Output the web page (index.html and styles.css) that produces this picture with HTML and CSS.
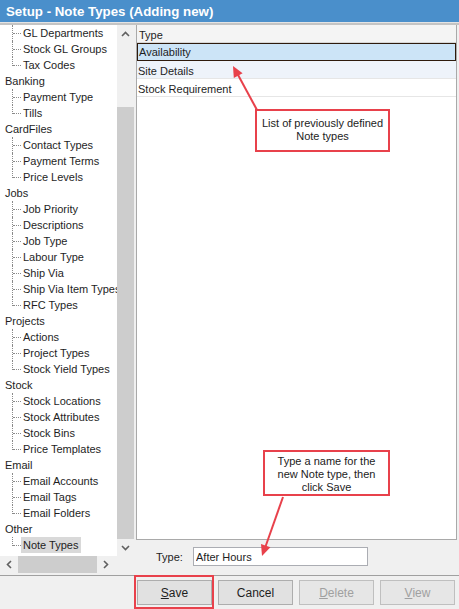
FILE: index.html
```html
<!DOCTYPE html>
<html lang="en">
<head>
    <meta charset="UTF-8">
    <title>Setup - Note Types (Adding new)</title>
    <link rel="stylesheet" href="styles.css">
</head>
<body>
    <div class="window">
        <div class="titlebar">Setup - Note Types (Adding new)</div>

        <div class="main">
            <div class="left">
                <div class="treebox">
                    <div class="tree">
                        <ul class="children open-top">
                            <li><span class="elbow"><span class="h"></span></span><span class="label">GL Departments</span></li>
                            <li><span class="elbow"><span class="h"></span></span><span class="label">Stock GL Groups</span></li>
                            <li class="last"><span class="elbow"><span class="h"></span></span><span class="label">Tax Codes</span></li>
                        </ul>
                        <div class="node">Banking</div>
                        <ul class="children">
                            <li><span class="elbow"><span class="h"></span></span><span class="label">Payment Type</span></li>
                            <li class="last"><span class="elbow"><span class="h"></span></span><span class="label">Tills</span></li>
                        </ul>
                        <div class="node">CardFiles</div>
                        <ul class="children">
                            <li><span class="elbow"><span class="h"></span></span><span class="label">Contact Types</span></li>
                            <li><span class="elbow"><span class="h"></span></span><span class="label">Payment Terms</span></li>
                            <li class="last"><span class="elbow"><span class="h"></span></span><span class="label">Price Levels</span></li>
                        </ul>
                        <div class="node">Jobs</div>
                        <ul class="children">
                            <li><span class="elbow"><span class="h"></span></span><span class="label">Job Priority</span></li>
                            <li><span class="elbow"><span class="h"></span></span><span class="label">Descriptions</span></li>
                            <li><span class="elbow"><span class="h"></span></span><span class="label">Job Type</span></li>
                            <li><span class="elbow"><span class="h"></span></span><span class="label">Labour Type</span></li>
                            <li><span class="elbow"><span class="h"></span></span><span class="label">Ship Via</span></li>
                            <li><span class="elbow"><span class="h"></span></span><span class="label">Ship Via Item Types</span></li>
                            <li class="last"><span class="elbow"><span class="h"></span></span><span class="label">RFC Types</span></li>
                        </ul>
                        <div class="node">Projects</div>
                        <ul class="children">
                            <li><span class="elbow"><span class="h"></span></span><span class="label">Actions</span></li>
                            <li><span class="elbow"><span class="h"></span></span><span class="label">Project Types</span></li>
                            <li class="last"><span class="elbow"><span class="h"></span></span><span class="label">Stock Yield Types</span></li>
                        </ul>
                        <div class="node">Stock</div>
                        <ul class="children">
                            <li><span class="elbow"><span class="h"></span></span><span class="label">Stock Locations</span></li>
                            <li><span class="elbow"><span class="h"></span></span><span class="label">Stock Attributes</span></li>
                            <li><span class="elbow"><span class="h"></span></span><span class="label">Stock Bins</span></li>
                            <li class="last"><span class="elbow"><span class="h"></span></span><span class="label">Price Templates</span></li>
                        </ul>
                        <div class="node">Email</div>
                        <ul class="children">
                            <li><span class="elbow"><span class="h"></span></span><span class="label">Email Accounts</span></li>
                            <li><span class="elbow"><span class="h"></span></span><span class="label">Email Tags</span></li>
                            <li class="last"><span class="elbow"><span class="h"></span></span><span class="label">Email Folders</span></li>
                        </ul>
                        <div class="node">Other</div>
                        <ul class="children">
                            <li class="last"><span class="elbow"><span class="h"></span></span><span class="label selected">Note Types</span></li>
                        </ul>
                    </div>
                    <div class="vscroll">
                        <div class="arrow">
                            <svg width="9" height="6" viewBox="0 0 9 6"><path d="M1 5 L4.5 1.5 L8 5" fill="none" stroke="#606060" stroke-width="1.6"/></svg>
                        </div>
                        <div class="track"><div class="vthumb"></div></div>
                        <div class="arrow">
                            <svg width="9" height="6" viewBox="0 0 9 6"><path d="M1 1 L4.5 4.5 L8 1" fill="none" stroke="#606060" stroke-width="1.6"/></svg>
                        </div>
                    </div>
                </div>
                <div class="hscroll">
                    <div class="hbar">
                        <div class="arrow">
                            <svg width="6" height="9" viewBox="0 0 6 9"><path d="M5 1 L1.5 4.5 L5 8" fill="none" stroke="#606060" stroke-width="1.6"/></svg>
                        </div>
                        <div class="hthumb"></div>
                        <div class="arrow">
                            <svg width="6" height="9" viewBox="0 0 6 9"><path d="M1 1 L4.5 4.5 L1 8" fill="none" stroke="#606060" stroke-width="1.6"/></svg>
                        </div>
                    </div>
                    <div class="corner"></div>
                </div>
            </div>

            <div class="right">
                <div class="grid">
                    <div class="grid-head">Type</div>
                    <div class="grid-row selected">Availability</div>
                    <div class="grid-row alt">Site Details</div>
                    <div class="grid-row">Stock Requirement</div>
                </div>
                <div class="entry">
                    <label class="entry-label" for="typeName">Type:</label>
                    <input class="entry-input" id="typeName" type="text" value="After Hours">
                </div>
            </div>
        </div>

        <div class="footer">
            <button class="btn"><u>S</u>ave</button>
            <button class="btn">Cancel</button>
            <button class="btn" disabled><u>D</u>elete</button>
            <button class="btn" disabled><u>V</u>iew</button>
        </div>

        <!-- annotations -->
        <div class="callout callout-list">List of previously defined<br>Note types</div>
        <div class="callout callout-type">Type a name for the<br>new Note type, then<br>click Save</div>
        <div class="save-mark"></div>
        <svg class="arrows" width="459" height="609" viewBox="0 0 459 609">
            <line x1="257" y1="110" x2="237" y2="73" stroke="#e8414b" stroke-width="2"/>
            <polygon points="233,66 242.6,73.3 233.8,78.1" fill="#e8414b"/>
            <line x1="283" y1="497" x2="265" y2="548" stroke="#e8414b" stroke-width="2"/>
            <polygon points="262,556 270.4,547.3 261,543.9" fill="#e8414b"/>
        </svg>
    </div>
</body>
</html>
```

FILE: styles.css
```css
* {
    box-sizing: border-box;
}

body {
    margin: 0;
    font-family: "Liberation Sans", Arial, sans-serif;
    font-size: 11px;
    color: #1e1e1e;
}

.window {
    position: relative;
    width: 459px;
    height: 609px;
    background: #f0f0f0;
    overflow: hidden;
    display: flex;
    flex-direction: column;
}

.titlebar {
    height: 25px;
    padding: 4px 0 0 6px;
    background: #4a8fcb;
    border-bottom: 2px solid #c4c4c4;
    box-shadow: inset 0 -1px 0 #e4e4e4;
    color: #fff;
    font-weight: bold;
    font-size: 13.3px;
    line-height: 16px;
}

.main {
    display: flex;
    height: 550px;
}

/* left tree panel */
.left {
    width: 134px;
    display: flex;
    flex-direction: column;
    padding-bottom: 2px;
}

.treebox {
    flex: 1;
    display: flex;
    min-height: 0;
}

.tree {
    width: 117px;
    background: #fff;
    overflow: hidden;
    white-space: nowrap;
}

.node {
    height: 16px;
    line-height: 16px;
    padding-left: 5px;
}

.children {
    list-style: none;
    margin: 0;
    padding: 0 0 0 12px;
}

.children li {
    display: flex;
    height: 16px;
    line-height: 16px;
}

.elbow {
    flex-shrink: 0;
    width: 9px;
    height: 16px;
    border-left: 1px dotted #8a8a8a;
}

.children li.last .elbow {
    height: 9px;
}

.elbow .h {
    display: block;
    width: 100%;
    height: 9px;
    border-bottom: 1px dotted #8a8a8a;
}

.label {
    flex-shrink: 0;
    padding: 0 3px 0 2px;
}

.label.selected {
    background: #d9d9d9;
}

.vscroll {
    width: 17px;
    display: flex;
    flex-direction: column;
    background: #f0f0f0;
}

.arrow {
    width: 17px;
    height: 17px;
    display: flex;
    align-items: center;
    justify-content: center;
    flex-shrink: 0;
}

.track {
    flex: 1;
    padding-top: 65px;
    display: flex;
}

.vthumb {
    flex: 1;
    background: #cdcdcd;
}

.hscroll {
    height: 17px;
    display: flex;
}

.hbar {
    width: 117px;
    display: flex;
    align-items: stretch;
    background: #f0f0f0;
}

.hbar .arrow {
    width: 18px;
    height: auto;
}

.hthumb {
    width: 79px;
    background: #cdcdcd;
}

.corner {
    width: 17px;
    background: #f0f0f0;
}

/* right grid panel */
.right {
    flex: 1;
    display: flex;
    flex-direction: column;
    margin: 0 2px 0 2px;
}

.grid {
    height: 515px;
    background: #fff;
    border-left: 1px solid #a9a9a9;
    border-right: 1px solid #a9a9a9;
    border-bottom: 1px solid #a9a9a9;
}

.grid-head {
    height: 18px;
    line-height: 18px;
    padding: 1px 0 0 2px;
    background: #f4f4f4;
    border-bottom: 1px solid #d6d6d6;
}

.grid-row {
    height: 18px;
    line-height: 16px;
    padding: 2px 0 0 1px;
    border-bottom: 1px solid #e6e6e6;
}

.grid-row.selected {
    background: #cce4f7;
    border: 1px solid #2e1a0c;
    line-height: 15px;
    padding-top: 1px;
}

.grid-row.alt {
    background: #eef3fa;
}

.entry {
    flex: 1;
    display: flex;
    align-items: center;
    padding: 0 0 2px 20px;
}

.entry-label {
    width: 37px;
}

.entry-input {
    width: 175px;
    height: 19px;
    padding: 0 2px;
    border: 1px solid #abadb3;
    background: #fff;
    font: inherit;
    color: #1e1e1e;
}

/* button bar */
.footer {
    flex: 1;
    display: flex;
    gap: 6px;
    align-items: flex-start;
    padding: 4px 0 0 137px;
    border-top: 1px solid #a0a0a0;
}

.btn {
    width: 75px;
    height: 25px;
    background: #e1e1e1;
    border: 1px solid #adadad;
    font-family: "Liberation Sans", Arial, sans-serif;
    font-size: 12px;
    color: #1e1e1e;
    padding: 0;
}

.btn:disabled {
    color: #a0a0a0;
    background: #e6e6e6;
    border-color: #bfbfbf;
}

/* annotations */
.callout {
    position: absolute;
    background: #fff;
    border: 2px solid #e8414b;
    text-align: center;
    font-size: 11px;
    line-height: 13px;
    color: #222;
}

.callout-list {
    left: 255px;
    top: 109px;
    width: 135px;
    height: 43px;
    padding-top: 6px;
}

.callout-type {
    left: 263px;
    top: 450px;
    width: 127px;
    height: 46px;
    padding-top: 3px;
}

.save-mark {
    position: absolute;
    left: 134px;
    top: 575px;
    width: 80px;
    height: 34px;
    border: 2px solid #e8414b;
}

.arrows {
    position: absolute;
    left: 0;
    top: 0;
    pointer-events: none;
}
```
